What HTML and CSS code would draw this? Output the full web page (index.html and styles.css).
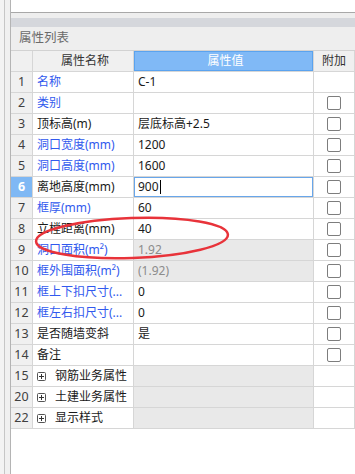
FILE: index.html
```html
<!DOCTYPE html>
<html lang="zh-CN">
  <head>
    <meta charset="UTF-8" />
    <meta name="viewport" content="width=device-width, initial-scale=1.0" />
    <title>属性列表</title>
    <link rel="stylesheet" href="styles.css">
  </head>
  <body>
    <div class="frame">
      <div class="panel">
        <div class="top-box"></div>
        <div class="gap"></div>
        <div class="band"></div>
        <div class="panel-title">属性列表</div>

        <div class="grid">
          <div class="row head">
            <div class="cell num"></div>
            <div class="cell name">属性名称</div>
            <div class="cell value active-head">属性值</div>
            <div class="cell extra">附加</div>
          </div>

          <div class="row">
            <div class="cell num">1</div>
            <div class="cell name link">名称</div>
            <div class="cell value">C-1</div>
            <div class="cell extra"></div>
          </div>
          <div class="row">
            <div class="cell num">2</div>
            <div class="cell name link">类别</div>
            <div class="cell value"></div>
            <div class="cell extra"><span class="check"></span></div>
          </div>
          <div class="row">
            <div class="cell num">3</div>
            <div class="cell name">顶标高(m)</div>
            <div class="cell value">层底标高+2.5</div>
            <div class="cell extra"><span class="check"></span></div>
          </div>
          <div class="row">
            <div class="cell num">4</div>
            <div class="cell name link">洞口宽度(mm)</div>
            <div class="cell value">1200</div>
            <div class="cell extra"><span class="check"></span></div>
          </div>
          <div class="row">
            <div class="cell num">5</div>
            <div class="cell name link">洞口高度(mm)</div>
            <div class="cell value">1600</div>
            <div class="cell extra"><span class="check"></span></div>
          </div>
          <div class="row">
            <div class="cell num selected">6</div>
            <div class="cell name">离地高度(mm)</div>
            <div class="cell value editing">900<span class="caret"></span></div>
            <div class="cell extra"><span class="check"></span></div>
          </div>
          <div class="row">
            <div class="cell num">7</div>
            <div class="cell name link">框厚(mm)</div>
            <div class="cell value">60</div>
            <div class="cell extra"><span class="check"></span></div>
          </div>
          <div class="row">
            <div class="cell num">8</div>
            <div class="cell name">立樘距离(mm)</div>
            <div class="cell value">40</div>
            <div class="cell extra"><span class="check"></span></div>
          </div>
          <div class="row">
            <div class="cell num">9</div>
            <div class="cell name link">洞口面积(m²)</div>
            <div class="cell value readonly">1.92</div>
            <div class="cell extra"><span class="check"></span></div>
          </div>
          <div class="row">
            <div class="cell num">10</div>
            <div class="cell name link">框外围面积(m²)</div>
            <div class="cell value readonly">(1.92)</div>
            <div class="cell extra"><span class="check"></span></div>
          </div>
          <div class="row">
            <div class="cell num">11</div>
            <div class="cell name link">框上下扣尺寸(...</div>
            <div class="cell value">0</div>
            <div class="cell extra"><span class="check"></span></div>
          </div>
          <div class="row">
            <div class="cell num">12</div>
            <div class="cell name link">框左右扣尺寸(...</div>
            <div class="cell value">0</div>
            <div class="cell extra"><span class="check"></span></div>
          </div>
          <div class="row">
            <div class="cell num">13</div>
            <div class="cell name">是否随墙变斜</div>
            <div class="cell value">是</div>
            <div class="cell extra"><span class="check"></span></div>
          </div>
          <div class="row">
            <div class="cell num">14</div>
            <div class="cell name">备注</div>
            <div class="cell value"></div>
            <div class="cell extra"><span class="check"></span></div>
          </div>

          <div class="row">
            <div class="cell num">15</div>
            <div class="cell name group">
              <svg class="plus" width="9" height="9" viewBox="0 0 9 9"><rect x="0.5" y="0.5" width="8" height="8" rx="1" fill="#fff" stroke="#555"/><path d="M2 4.5h5M4.5 2v5" stroke="#333"/></svg>
              钢筋业务属性
            </div>
            <div class="cell value readonly"></div>
            <div class="cell extra"></div>
          </div>
          <div class="row">
            <div class="cell num">20</div>
            <div class="cell name group">
              <svg class="plus" width="9" height="9" viewBox="0 0 9 9"><rect x="0.5" y="0.5" width="8" height="8" rx="1" fill="#fff" stroke="#555"/><path d="M2 4.5h5M4.5 2v5" stroke="#333"/></svg>
              土建业务属性
            </div>
            <div class="cell value readonly"></div>
            <div class="cell extra"></div>
          </div>
          <div class="row">
            <div class="cell num">22</div>
            <div class="cell name group">
              <svg class="plus" width="9" height="9" viewBox="0 0 9 9"><rect x="0.5" y="0.5" width="8" height="8" rx="1" fill="#fff" stroke="#555"/><path d="M2 4.5h5M4.5 2v5" stroke="#333"/></svg>
              显示样式
            </div>
            <div class="cell value readonly"></div>
            <div class="cell extra"></div>
          </div>
        </div>
      </div>
    </div>

    <!-- red hand-drawn mark over row 8 -->
    <svg class="mark" width="355" height="474" viewBox="0 0 355 474">
      <ellipse cx="132" cy="238" rx="96" ry="20" transform="rotate(-2 132 238)" fill="none" stroke="#e8333a" stroke-width="2.5"/>
    </svg>
  </body>
</html>
```

FILE: styles.css
```css
html,
body {
  margin: 0;
  padding: 0;
  height: 100%;
}

body {
  position: relative;
  background-color: #f3f3f3;
  font-family: "Noto Sans", "Noto Sans CJK SC", sans-serif;
  font-size: 12px;
  color: #1a1a1a;
  overflow: hidden;
}

.frame {
  margin-left: 4px;
  height: 100%;
  border-left: 1px solid #c6c6c6;
  padding-left: 5px;
  background-color: #f0f0f0;
}

.panel {
  height: 100%;
  border-left: 1px solid #b4b4b4;
  background-color: #fff;
}

.top-box {
  height: 12px;
  background-color: #fff;
  border-bottom: 1px solid #a8a8a8;
}

.gap {
  height: 5px;
  background-color: #eeeeee;
}

.band {
  height: 9px;
  background-color: #d5d7dc;
}

.panel-title {
  height: 23px;
  line-height: 22px;
  padding-left: 8px;
  background-color: #eeeeee;
  color: #6a6a6a;
  font-size: 12.5px;
}

.grid {
  border-top: 1px solid #d2d2d2;
}

.row {
  display: grid;
  grid-template-columns: 22px 101px 180px 41px;
  height: 21px;
}

.cell {
  box-sizing: border-box;
  border-right: 1px solid #d6d6d6;
  border-bottom: 1px solid #d6d6d6;
  line-height: 20px;
  white-space: nowrap;
  overflow: hidden;
}

.num {
  background-color: #f0f0f0;
  color: #404040;
  text-align: center;
  font-size: 12.5px;
}

.num.selected {
  background-color: #7fb8f4;
  color: #fff;
  font-weight: bold;
}

.name {
  padding-left: 4px;
}

.name.link {
  color: #3159ee;
}

.name.group {
  display: flex;
  align-items: center;
  gap: 9px;
}

.plus {
  flex: none;
}

.value {
  padding-left: 4px;
}

.value.readonly {
  background-color: #e9e9e9;
  color: #8c8c8c;
}

.value.editing {
  box-shadow: inset 0 0 0 1px #68a6ea;
}

.caret {
  display: inline-block;
  width: 1px;
  height: 14px;
  margin-left: 1px;
  vertical-align: -3px;
  background-color: #000;
}

.extra {
  display: flex;
  align-items: center;
  justify-content: center;
}

.check {
  width: 12px;
  height: 12px;
  border: 1px solid #7d7d7d;
  border-radius: 2px;
  background-color: #fff;
}

.head .cell {
  background-color: #f0f0f0;
  text-align: center;
  color: #333;
}

.head .active-head {
  background-color: #80b9f6;
  color: #fff;
  box-shadow: inset 0 0 0 1px #5aa3ef;
}

.mark {
  position: absolute;
  left: 0;
  top: 0;
  pointer-events: none;
}
```
